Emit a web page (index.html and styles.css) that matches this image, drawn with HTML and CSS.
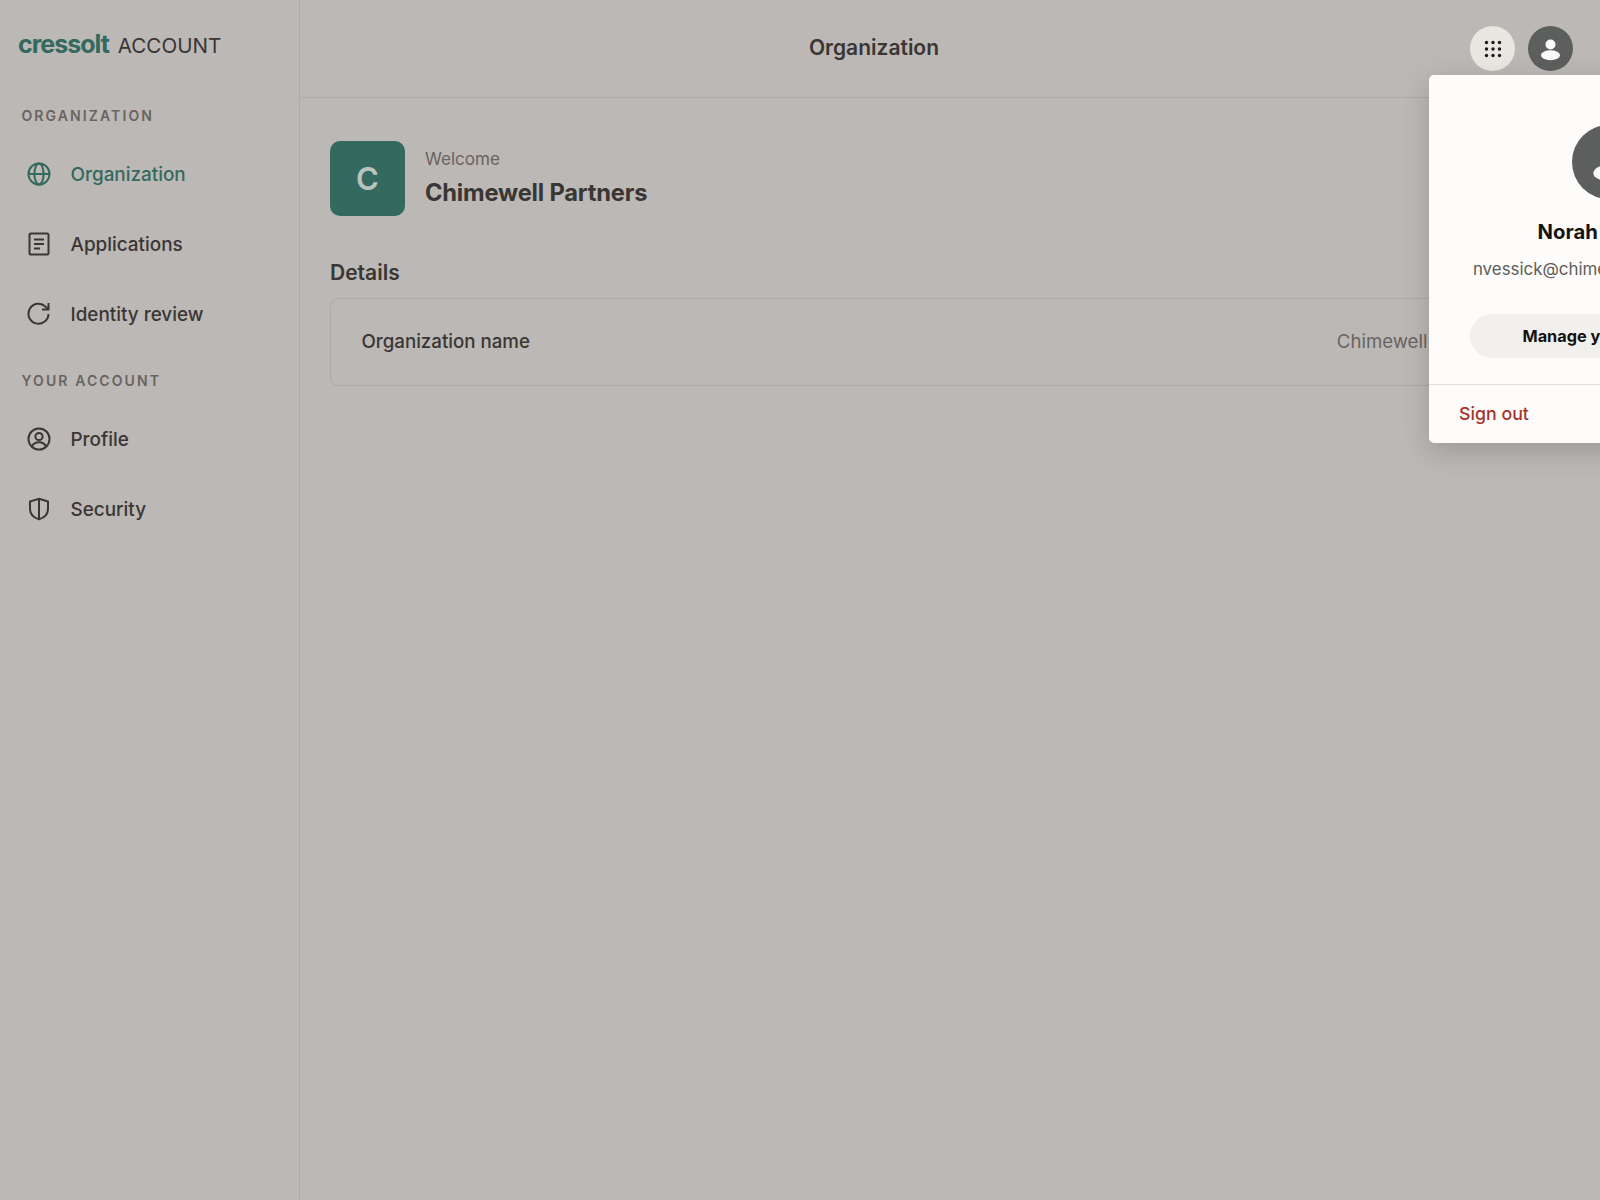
FILE: index.html
```html
<!DOCTYPE html>
<html lang="en">
<head>
<meta charset="UTF-8" />
<meta name="viewport" content="width=device-width, initial-scale=1" />
<title>Organization - Cressolt Account</title>
<link rel="stylesheet" href="styles.css">
</head>
<body>

<div class="page">
  <aside class="sidebar">
    <div class="brand">
      <span class="brand-logo">cressolt</span>
      <span class="brand-name">ACCOUNT</span>
    </div>

    <div class="nav-label">ORGANIZATION</div>
    <a class="nav-item active" href="#organization">
      <svg class="nav-icon" viewBox="0 0 24 24"><circle cx="12" cy="12" r="10.5"/><ellipse cx="12" cy="12" rx="4.6" ry="10.5"/><path d="M1.5 12h21"/></svg>
      Organization
    </a>
    <a class="nav-item" href="#applications">
      <svg class="nav-icon" viewBox="0 0 24 24"><rect x="2.5" y="1.5" width="19" height="21" rx="1.5"/><path d="M7 7.5h10M7 12h10M7 16.5h6"/></svg>
      Applications
    </a>
    <a class="nav-item" href="#identity">
      <svg class="nav-icon" viewBox="0 0 24 24"><path d="M21.5 12A10 10 0 1 1 18.5 4.600L21.5 7.500"/><path d="M21.5 1v6.500H15"/></svg>
      Identity review
    </a>

    <div class="nav-label nav-label-second">YOUR ACCOUNT</div>
    <a class="nav-item" href="#profile">
      <svg class="nav-icon" viewBox="0 0 24 24"><circle cx="12" cy="12" r="10.5"/><circle cx="12" cy="9.500" r="3.600"/><path d="M5 19.500c1.200-3 3.800-4.200 7-4.200s5.800 1.200 7 4.200"/></svg>
      Profile
    </a>
    <a class="nav-item" href="#security">
      <svg class="nav-icon" viewBox="0 0 24 24"><path d="M12 1.800l9 2.800v7.400c0 5-3.600 8.600-9 10.400-5.400-1.800-9-5.400-9-10.400V4.600z"/><path d="M12 1.800v20.400"/></svg>
      Security
    </a>
  </aside>

  <div class="content">
    <header class="topbar">
      <h1 class="topbar-title">Organization</h1>
      <div class="topbar-actions">
        <button class="round-btn apps-btn" aria-label="Apps">
          <svg viewBox="0 0 18 18" width="18" height="18"><g fill="#1c1b1a"><circle cx="2.500" cy="2.500" r="1.700"/><circle cx="9" cy="2.500" r="1.700"/><circle cx="15.500" cy="2.500" r="1.700"/><circle cx="2.500" cy="9" r="1.700"/><circle cx="9" cy="9" r="1.700"/><circle cx="15.500" cy="9" r="1.700"/><circle cx="2.500" cy="15.500" r="1.700"/><circle cx="9" cy="15.500" r="1.700"/><circle cx="15.500" cy="15.500" r="1.700"/></g></svg>
        </button>
        <button class="round-btn user-btn" aria-label="Account">
          <svg viewBox="0 0 45 45" width="45" height="45"><g fill="#fbfaf8"><circle cx="22.500" cy="18.500" r="5"/><ellipse cx="22.500" cy="29.200" rx="9.500" ry="5"/></g></svg>
        </button>
      </div>
    </header>

    <main class="main">
      <div class="org-head">
        <div class="org-tile">C</div>
        <div>
          <div class="org-welcome">Welcome</div>
          <div class="org-name">Chimewell Partners</div>
        </div>
      </div>

      <h2 class="section-title">Details</h2>
      <div class="detail-card">
        <span class="detail-label">Organization name</span>
        <span class="detail-value">Chimewell Partners</span>
      </div>
    </main>
  </div>
</div>

<!-- Account menu, runs past the right edge of the window -->
<div class="account-menu">
  <div class="menu-top">
    <div class="menu-avatar">
      <svg viewBox="0 0 74 74" width="74" height="74"><g fill="#fbfaf8"><circle cx="37" cy="30.500" r="8.200"/><ellipse cx="37" cy="48" rx="15.600" ry="8.200"/></g></svg>
    </div>
    <div class="menu-name">Norah Vessick</div>
    <div class="menu-email">nvessick@chimewellpartners.com</div>
    <button class="manage-btn">Manage your account</button>
  </div>
  <div class="menu-bottom">
    <a class="sign-out" href="#signout">Sign out</a>
  </div>
</div>

</body>
</html>
```

FILE: styles.css
```css
/* Basic Reset */
* {
  margin: 0; padding: 0; box-sizing: border-box;
}
html, body {
  height: 100%;
  overflow: hidden;
}
body {
  font-family: Inter, 'Noto Sans', sans-serif;
  background: #bcb8b5;
  color: #393634;
  position: relative;
}
.page {
  display: flex;
  height: 100%;
}
/* Sidebar */
.sidebar {
  width: 300px;
  flex-shrink: 0;
  border-right: 1px solid #aeaaa6;
  padding: 0 0 0 18px;
}
.brand {
  display: flex;
  align-items: baseline;
  height: 60px;
  padding-top: 29px;
  gap: 9px;
}
.brand-logo {
  color: #33695f;
  font-size: 25px;
  font-weight: 700;
  letter-spacing: -1px;
  line-height: 30px;
}
.brand-name {
  font-size: 20.6px;
  line-height: 30px;
}
.nav-label {
  color: #686461;
  font-size: 14px;
  font-weight: 600;
  letter-spacing: 2.1px;
  line-height: 18px;
  margin: 47px 0 0 3.5px;
  height: 32px;
}
.nav-label-second {
  margin-top: 23px;
}
.nav-item {
  display: flex;
  align-items: center;
  gap: 19.5px;
  height: 70px;
  padding-left: 9px;
  color: #393634;
  font-size: 18.9px;
  font-weight: 550;
  text-decoration: none;
}
.nav-item.active {
  color: #33695f;
}
.nav-icon {
  width: 24px;
  height: 24px;
  flex-shrink: 0;
  fill: none;
  stroke: currentColor;
  stroke-width: 2;
}
/* Top bar */
.content {
  flex: 1;
  min-width: 0;
}
.topbar {
  display: flex;
  align-items: center;
  height: 98px;
  padding-right: 27.5px;
  border-bottom: 1px solid #aeaaa6;
}
.topbar-title {
  flex: 1;
  text-align: center;
  font-size: 21px;
  font-weight: 600;
  padding-bottom: 2px;
}
.topbar-actions {
  display: flex;
  gap: 12.5px;
  margin-left: 22px;
}
.round-btn {
  width: 45px;
  height: 45px;
  border: 0;
  border-radius: 50%;
  display: flex;
  align-items: center;
  justify-content: center;
}
.apps-btn {
  background: #e9e7e2;
}
.user-btn {
  background: #5c5f5d;
}
/* Main */
.main {
  padding: 43px 62px 0 30px;
}
.org-head {
  display: flex;
  align-items: center;
  gap: 20px;
}
.org-tile {
  width: 75px;
  height: 75px;
  border-radius: 10px;
  background: #33695f;
  color: #bac3be;
  font-size: 31px;
  font-weight: 600;
  display: flex;
  align-items: center;
  justify-content: center;
}
.org-welcome {
  color: #686461;
  font-size: 17.1px;
  line-height: 20px;
  margin-bottom: 8px;
}
.org-name {
  font-size: 23.7px;
  font-weight: 650;
  letter-spacing: -0.2px;
  line-height: 32px;
}
.section-title {
  font-size: 21px;
  font-weight: 600;
  line-height: 28px;
  margin: 43px 0 11px;
}
.detail-card {
  display: flex;
  justify-content: space-between;
  align-items: center;
  height: 88px;
  padding: 0 30px 2px 30.5px;
  border: 1px solid #aeaaa6;
  border-radius: 8px;
}
.detail-label {
  font-size: 18.7px;
  font-weight: 550;
}
.detail-value {
  color: #686461;
  font-size: 18.6px;
}
/* Account menu */
.account-menu {
  position: absolute;
  top: 75px;
  left: 1429px;
  width: 360px;
  height: 368px;
  background: #fdfcfa;
  border-radius: 5px;
  box-shadow: 0 8px 28px rgba(0,0,0,0.18);
}
.menu-top {
  display: flex;
  flex-direction: column;
  align-items: center;
  padding-top: 50px;
  height: 310px;
  border-bottom: 1px solid #dedcd8;
}
.menu-avatar {
  width: 74px;
  height: 74px;
  border-radius: 50%;
  background: #5c5f5d;
  overflow: hidden;
}
.menu-name {
  color: #141312;
  font-size: 20.3px;
  font-weight: 650;
  line-height: 28px;
  margin-top: 19px;
}
.menu-email {
  color: #5e5b58;
  font-size: 16.9px;
  line-height: 20px;
  margin-top: 13px;
}
.manage-btn {
  width: 278px;
  height: 44px;
  margin-top: 35px;
  border: 0;
  border-radius: 22px;
  background: #f1f0ec;
  color: #141312;
  font: 650 16.3px Inter, 'Noto Sans', sans-serif;
}
.menu-bottom {
  display: flex;
  align-items: center;
  height: 58px;
  padding: 0 0 2px 30px;
}
.sign-out {
  color: #a5352b;
  font-size: 17.8px;
  font-weight: 550;
  text-decoration: none;
}
```
